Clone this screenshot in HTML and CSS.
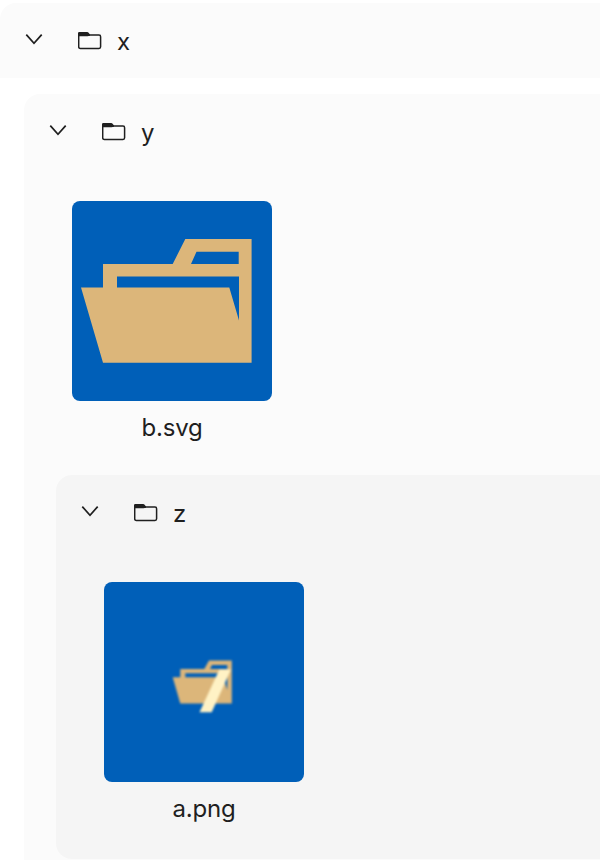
FILE: index.html
```html
<!DOCTYPE html>
<html lang="en">
<head>
<meta charset="utf-8">
<title>x</title>
<link rel="stylesheet" href="styles.css">
</head>
<body>
<svg class="defs" aria-hidden="true">
  <symbol id="chevron" viewBox="0 0 20 20"><path d="M2.3 4.6 10 13.3 17.7 4.6" fill="none" stroke="currentColor" stroke-width="1.7"/></symbol>
  <symbol id="folder" viewBox="0 0 24 20"><path d="M.7 3V15.8Q.7 17.4 2.3 17.4H21Q22.6 17.4 22.6 15.8V5.7Q22.6 4.1 21 4.1H1" fill="none" stroke="currentColor" stroke-width="1.5"/><path d="M0 5.2V2.2Q0 .9 1.3 .9H9Q10.2 .9 10.8 2L12 3.6V4.8L9.5 5.2Z" fill="currentColor"/></symbol>
</svg>
<main class="tree">
  <div class="row root"><svg class="chevron"><use href="#chevron"/></svg><svg class="folder"><use href="#folder"/></svg><span class="name">x</span></div>
  <section class="panel">
    <div class="row"><svg class="chevron"><use href="#chevron"/></svg><svg class="folder"><use href="#folder"/></svg><span class="name">y</span></div>
    <figure class="item">
      <svg class="tile" viewBox="0 0 200 200">
        <path fill="#dcb67a" fill-rule="evenodd" d="M9 86.4H31V63H100.7L113.3 38H179.6V161.8H31ZM119 63H166.7V50.7H124.5ZM45 75.4V86.4H157.3L167 119.5V75.4Z"/>
      </svg>
      <figcaption>b.svg</figcaption>
    </figure>
    <section class="panel nested">
      <div class="row"><svg class="chevron"><use href="#chevron"/></svg><svg class="folder"><use href="#folder"/></svg><span class="name">z</span></div>
      <figure class="item">
        <svg class="tile" viewBox="0 0 200 200">
          <g class="soft">
            <path fill="#dcb67a" fill-rule="evenodd" d="M68.7 95.3H76.3V87H100.3L105 78.6H127.8V121.5H76.3ZM106 87H123.3V83H108ZM81.3 91.2V95.3H119.3L123.3 108V91.2Z"/>
            <path fill="#fff2c5" d="M115.3 87.5H127L107.7 130.3H95.5Z"/>
          </g>
        </svg>
        <figcaption>a.png</figcaption>
      </figure>
    </section>
  </section>
</main>
</body>
</html>
```
FILE: styles.css
```css
* { box-sizing: border-box; }
body {
  margin: 0;
  height: 860px;
  overflow: hidden;
  background: #fff;
  color: #1f1f1f;
  font: 24px/32px Inter, sans-serif;
}
.defs { display: none; }
.tree { padding-top: 3px; }
.row {
  display: flex;
  align-items: center;
  height: 75px;
  padding-left: 24px;
}
.root {
  background: #fbfbfb;
  border-radius: 16px 0 0 0;
}
.chevron { width: 20px; height: 20px; margin-top: -2px; }
.folder { width: 24px; height: 20px; margin: 0 15px 0 34px; }
.name { padding-top: 3px; }
.panel {
  margin: 16px 0 0 24px;
  background: #fbfbfb;
  border-radius: 16px 0 0 16px;
  padding-bottom: 17px;
}
.nested {
  margin: 31px 0 0 32px;
  height: 384px;
  background: #f5f5f5;
}
.item {
  width: 200px;
  margin: 32px 0 0 48px;
  text-align: center;
}
.tile {
  display: block;
  width: 200px;
  height: 200px;
  border-radius: 8px;
  background: #005fb8;
}
.soft { filter: blur(.8px); }
figcaption {
  padding-top: 11px;
  letter-spacing: -.2px;
}
```
